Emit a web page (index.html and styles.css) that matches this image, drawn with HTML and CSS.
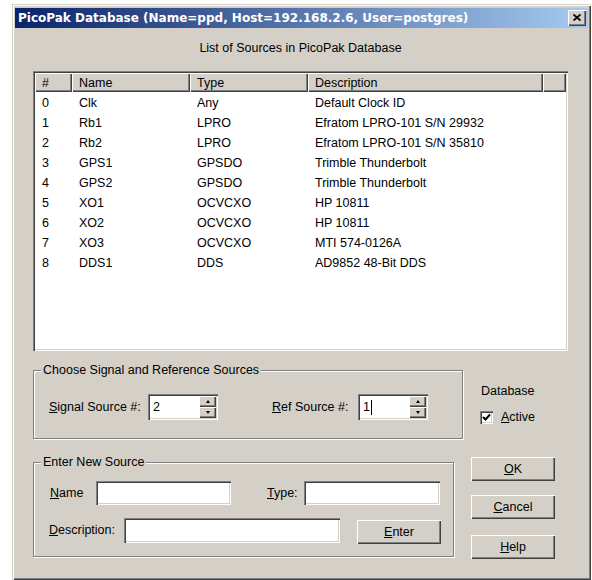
FILE: index.html
```html
<!DOCTYPE html>
<html>
<head>
<meta charset="utf-8">
<title>PicoPak Database</title>
<link rel="stylesheet" href="styles.css">
</head>
<body>
<div class="window">
  <div class="titlebar">
    <span class="title-text">PicoPak Database (Name=ppd, Host=192.168.2.6, User=postgres)</span>
    <span class="close-btn">
      <svg width="8" height="7" viewBox="0 0 8 7"><path d="M0.5 0.5 L7.5 6.5 M7.5 0.5 L0.5 6.5" stroke="#000" stroke-width="1.8" fill="none"/></svg>
    </span>
  </div>
  <div class="client">
    <div class="caption">List of Sources in PicoPak Database</div>

    <div class="listview">
      <table class="sources">
        <colgroup>
          <col class="c-id"><col class="c-name"><col class="c-type"><col class="c-desc"><col>
        </colgroup>
        <thead>
          <tr><th>#</th><th>Name</th><th>Type</th><th>Description</th><th></th></tr>
        </thead>
        <tbody>
          <tr><td>0</td><td>Clk</td><td>Any</td><td>Default Clock ID</td><td></td></tr>
          <tr><td>1</td><td>Rb1</td><td>LPRO</td><td>Efratom LPRO-101 S/N 29932</td><td></td></tr>
          <tr><td>2</td><td>Rb2</td><td>LPRO</td><td>Efratom LPRO-101 S/N 35810</td><td></td></tr>
          <tr><td>3</td><td>GPS1</td><td>GPSDO</td><td>Trimble Thunderbolt</td><td></td></tr>
          <tr><td>4</td><td>GPS2</td><td>GPSDO</td><td>Trimble Thunderbolt</td><td></td></tr>
          <tr><td>5</td><td>XO1</td><td>OCVCXO</td><td>HP 10811</td><td></td></tr>
          <tr><td>6</td><td>XO2</td><td>OCVCXO</td><td>HP 10811</td><td></td></tr>
          <tr><td>7</td><td>XO3</td><td>OCVCXO</td><td>MTI 574-0126A</td><td></td></tr>
          <tr><td>8</td><td>DDS1</td><td>DDS</td><td>AD9852 48-Bit DDS</td><td></td></tr>
        </tbody>
      </table>
    </div>

    <div class="lower-row">
      <div class="group group-choose">
        <span class="group-label">Choose Signal and Reference Sources</span>
        <div class="field-row">
          <span class="lbl lbl-signal"><u>S</u>ignal Source #:</span>
          <div class="spin">
            <span class="spin-value">2</span>
            <span class="spin-buttons">
              <span class="spin-btn"><span class="arrow-up"></span></span>
              <span class="spin-btn"><span class="arrow-down"></span></span>
            </span>
          </div>
          <span class="lbl lbl-ref"><u>R</u>ef Source #:</span>
          <div class="spin">
            <span class="spin-value">1<span class="caret"></span></span>
            <span class="spin-buttons">
              <span class="spin-btn"><span class="arrow-up"></span></span>
              <span class="spin-btn"><span class="arrow-down"></span></span>
            </span>
          </div>
        </div>
      </div>
      <div class="db-box">
        <div class="db-title">Database</div>
        <div class="check-row">
          <span class="checkbox">
            <svg width="9" height="9" viewBox="0 0 9 9"><path d="M1 4 L3.5 6.5 L8 1.5" stroke="#000" stroke-width="2" fill="none"/></svg>
          </span>
          <span class="check-label"><u>A</u>ctive</span>
        </div>
      </div>
    </div>

    <div class="lower-row row-two">
      <div class="group group-new">
        <span class="group-label">Enter New Source</span>
        <div class="field-row">
          <span class="lbl lbl-name"><u>N</u>ame</span>
          <span class="field f-name"></span>
          <span class="lbl lbl-type"><u>T</u>ype:</span>
          <span class="field f-type"></span>
        </div>
        <div class="field-row row-desc">
          <span class="lbl lbl-desc"><u>D</u>escription:</span>
          <span class="field f-desc"></span>
          <span class="btn btn-enter"><u>E</u>nter</span>
        </div>
      </div>
      <div class="btn-col">
        <span class="btn"><u>O</u>K</span>
        <span class="btn btn-cancel"><u>C</u>ancel</span>
        <span class="btn btn-help"><u>H</u>elp</span>
      </div>
    </div>
  </div>
</div>
</body>
</html>
```

FILE: styles.css
```css
html, body {
  margin: 0;
  padding: 0;
  background: #ffffff;
}

body {
  font-family: "Liberation Sans", Arial, sans-serif;
  font-size: 12.5px;
  color: #000;
}

u {
  text-decoration: underline;
  text-underline-offset: 1px;
}

/* dialog frame */
.window {
  margin: 4px 0 0 12px;
  width: 579px;
  height: 576px;
  box-sizing: border-box;
  padding: 4px 3px 3px 3px;
  background: #d4d0c8;
  box-shadow:
    inset 1px 1px 0 #d4d0c8,
    inset 2px 2px 0 #ffffff,
    inset -1px -1px 0 #404040,
    inset -2px -2px 0 #808080;
  display: flex;
  flex-direction: column;
}

.titlebar {
  height: 20px;
  background: linear-gradient(to right, #0a246a, #a6caf0);
  display: flex;
  align-items: center;
  justify-content: space-between;
  padding: 0 2px 0 3px;
}

.title-text {
  font-family: "DejaVu Sans", Verdana, sans-serif;
  font-weight: bold;
  font-size: 12px;
  color: #ffffff;
  white-space: nowrap;
  line-height: 20px;
}

.close-btn {
  width: 18px;
  height: 16px;
  box-sizing: border-box;
  background: #d4d0c8;
  box-shadow:
    inset 1px 1px 0 #ffffff,
    inset -1px -1px 0 #404040,
    inset -2px -2px 0 #808080;
  display: flex;
  align-items: center;
  justify-content: center;
  padding-bottom: 1px;
}

.client {
  padding: 0 20px 0 18px;
  display: flex;
  flex-direction: column;
}

.caption {
  margin-top: 13px;
  line-height: 15px;
  text-align: center;
}

/* list view */
.listview {
  margin-top: 15px;
  height: 280px;
  box-sizing: border-box;
  padding: 2px;
  background: #ffffff;
  box-shadow:
    inset 1px 1px 0 #808080,
    inset 2px 2px 0 #404040,
    inset -1px -1px 0 #ffffff,
    inset -2px -2px 0 #d4d0c8;
  overflow: hidden;
}

.sources {
  width: 100%;
  border-collapse: separate;
  border-spacing: 0;
  table-layout: fixed;
}

.c-id { width: 37px; }
.c-name { width: 118px; }
.c-type { width: 118px; }
.c-desc { width: 235px; }

.sources th {
  height: 19px;
  box-sizing: border-box;
  padding: 1px 0 0 7px;
  text-align: left;
  font-weight: normal;
  background: #d4d0c8;
  box-shadow:
    inset 1px 1px 0 #ffffff,
    inset -1px -1px 0 #404040,
    inset -2px -2px 0 #808080;
  white-space: nowrap;
}

.sources td {
  height: 20px;
  box-sizing: border-box;
  padding: 2px 0 0 7px;
  white-space: nowrap;
  overflow: hidden;
}

/* lower section */
.lower-row {
  display: flex;
  align-items: flex-start;
  margin-top: 19px;
}

.row-two {
  margin-top: 18px;
}

.group {
  position: relative;
  box-sizing: border-box;
  border: 1px solid #808080;
  box-shadow:
    inset 1px 1px 0 #ffffff,
    1px 1px 0 #ffffff;
}

.group-label {
  position: absolute;
  top: -8px;
  left: 7px;
  padding: 0 2px;
  line-height: 15px;
  background: #d4d0c8;
}

.group-choose {
  width: 430px;
  height: 69px;
  padding: 23px 0 0 15px;
}

.group-new {
  margin-top: 5px;
  width: 421px;
  height: 95px;
  padding: 18px 0 0 15px;
}

.field-row {
  display: flex;
  align-items: center;
}

.lbl {
  white-space: nowrap;
  line-height: 15px;
}

.lbl-signal { width: 99px; }
.lbl-ref { width: 86px; margin-left: 54px; }
.lbl-name { width: 47px; padding-left: 1px; box-sizing: border-box; }
.lbl-type { width: 37px; margin-left: 36px; }
.lbl-desc { width: 75px; }

/* spin edit */
.spin {
  width: 70px;
  height: 26px;
  box-sizing: border-box;
  padding: 2px 2px 2px 2px;
  background: #ffffff;
  box-shadow:
    inset 1px 1px 0 #808080,
    inset 2px 2px 0 #404040,
    inset -1px -1px 0 #ffffff,
    inset -2px -2px 0 #d4d0c8;
  display: flex;
}

.spin-value {
  flex: 1;
  padding-left: 3px;
  line-height: 22px;
  display: flex;
  align-items: center;
}

.caret {
  display: inline-block;
  width: 1px;
  height: 15px;
  background: #000;
  margin-left: 1px;
}

.spin-buttons {
  width: 17px;
  display: flex;
  flex-direction: column;
}

.spin-btn {
  flex: 1;
  background: #d4d0c8;
  box-shadow:
    inset 1px 1px 0 #ffffff,
    inset -1px -1px 0 #404040,
    inset -2px -2px 0 #808080;
  display: flex;
  align-items: center;
  justify-content: center;
}

.arrow-up {
  width: 0;
  height: 0;
  border-left: 2.5px solid transparent;
  border-right: 2.5px solid transparent;
  border-bottom: 3px solid #000;
}

.arrow-down {
  width: 0;
  height: 0;
  border-left: 2.5px solid transparent;
  border-right: 2.5px solid transparent;
  border-top: 3px solid #000;
}

/* database box */
.db-box {
  margin-left: 17px;
  padding-top: 14px;
}

.db-title {
  padding-left: 1px;
  line-height: 15px;
}

.check-row {
  margin-top: 11px;
  display: flex;
  align-items: center;
  height: 15px;
}

.checkbox {
  width: 13px;
  height: 13px;
  box-sizing: border-box;
  background: #ffffff;
  box-shadow:
    inset 1px 1px 0 #808080,
    inset 2px 2px 0 #404040,
    inset -1px -1px 0 #ffffff,
    inset -2px -2px 0 #d4d0c8;
  display: flex;
  align-items: center;
  justify-content: center;
}

.check-label {
  margin-left: 8px;
  line-height: 15px;
}

/* edit fields */
.field {
  display: block;
  box-sizing: border-box;
  background: #ffffff;
  box-shadow:
    inset 1px 1px 0 #808080,
    inset 2px 2px 0 #404040,
    inset -1px -1px 0 #ffffff,
    inset -2px -2px 0 #d4d0c8;
}

.f-name { width: 135px; height: 24px; }
.f-type { width: 136px; height: 24px; }

.row-desc {
  margin-top: 13px;
  align-items: flex-start;
}

.row-desc .lbl-desc {
  line-height: 25px;
}

.f-desc { width: 216px; height: 25px; }

/* push buttons */
.btn {
  width: 84px;
  height: 24px;
  box-sizing: border-box;
  background: #d4d0c8;
  box-shadow:
    inset 1px 1px 0 #ffffff,
    inset -1px -1px 0 #404040,
    inset -2px -2px 0 #808080;
  display: flex;
  align-items: center;
  justify-content: center;
  line-height: 15px;
}

.btn-enter {
  margin-left: 17px;
  margin-top: 2px;
}

.btn-col {
  margin-left: 17px;
  display: flex;
  flex-direction: column;
}

.btn-cancel { margin-top: 14px; }
.btn-help { margin-top: 16px; }
```
